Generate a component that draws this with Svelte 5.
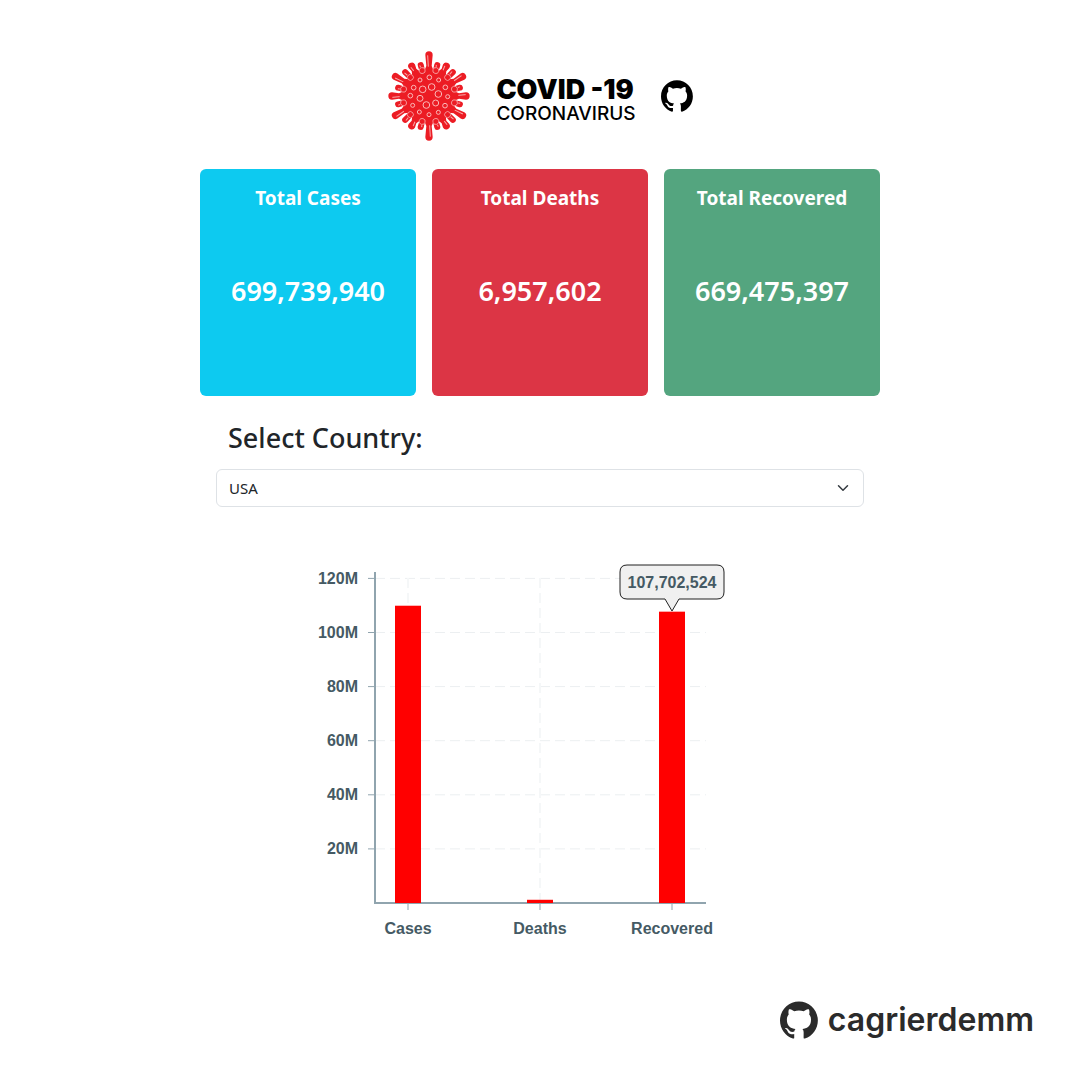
<script>
  const totals = [
    { title: 'Total Cases', value: 699739940, tone: 'cases' },
    { title: 'Total Deaths', value: 6957602, tone: 'deaths' },
    { title: 'Total Recovered', value: 669475397, tone: 'recovered' }
  ];

  const format = (n) => n.toLocaleString('en-US');

  const countries = ['USA', 'India', 'France', 'Germany', 'Brazil', 'Turkey'];
  let country = $state('USA');

  // Plot geometry, in SVG user units.
  const base = 353;
  const perMillion = 2.705;
  const ticks = [20, 40, 60, 80, 100, 120].map((m) => ({
    label: `${m}M`,
    y: base - m * perMillion
  }));
  const bars = [
    { label: 'Cases', value: 109.9, x: 108 },
    { label: 'Deaths', value: 1.19, x: 240 },
    { label: 'Recovered', value: 107.702524, x: 372 }
  ].map((b) => ({ ...b, top: base - b.value * perMillion }));

  // Virus drawing: long spikes every 30 degrees, short ones between them.
  const longTips = [126, 106, 119, 114, 119, 106, 126, 106, 119, 114, 119, 106];
  const spikes = longTips.map((tip, i) => ({ angle: i * 30, tip }));
  const studs = Array.from({ length: 12 }, (_, i) => ({
    angle: i * 30 + 15,
    tip: i % 3 === 1 ? 101 : 96
  }));
  const rings = [
    [150, 110, 7], [122, 118, 6], [178, 118, 6], [130, 146, 10], [157, 139, 10],
    [198, 140, 7], [103, 141, 7], [93, 165, 7], [177, 160, 10], [205, 168, 6],
    [122, 173, 9], [100, 194, 6], [141, 193, 10], [169, 187, 9], [197, 195, 7],
    [120, 214, 6], [149, 222, 6], [177, 215, 6]
  ];
</script>

{#snippet octocat()}
  <svg viewBox="0 0 98 96" aria-hidden="true">
    <path
      fill="currentColor"
      d="M48.854 0C21.839 0 0 22 0 49.217c0 21.756 13.993 40.172 33.405 46.69 2.427.49 3.316-1.059 3.316-2.362 0-1.141-.08-5.052-.08-9.127-13.59 2.934-16.42-5.867-16.42-5.867-2.184-5.704-5.42-7.17-5.42-7.17-4.448-3.015.324-3.015.324-3.015 4.934.326 7.523 5.052 7.523 5.052 4.367 7.496 11.404 5.378 14.235 4.074.404-3.178 1.699-5.378 3.074-6.6-10.839-1.141-22.243-5.378-22.243-24.283 0-5.378 1.94-9.778 5.014-13.2-.485-1.222-2.184-6.275.486-13.038 0 0 4.125-1.304 13.426 5.052a46.97 46.97 0 0 1 12.214-1.63c4.125 0 8.33.571 12.213 1.63 9.302-6.356 13.427-5.052 13.427-5.052 2.67 6.763.97 11.816.485 13.038 3.155 3.422 5.015 7.822 5.015 13.2 0 18.905-11.404 23.06-22.324 24.283 1.78 1.548 3.316 4.481 3.316 9.126 0 6.6-.08 11.897-.08 13.526 0 1.304.89 2.853 3.316 2.364 19.412-6.52 33.405-24.935 33.405-46.691C97.707 22 75.788 0 48.854 0z"
    />
  </svg>
{/snippet}

<div class="page">
  <header>
    <svg class="virus" viewBox="23 28 252 276" aria-hidden="true">
      <g fill="#ec1c24">
        {#each studs as s}
          <g transform="translate(149 166) rotate({s.angle})">
            <path d="M-8 -70 L-9 {-s.tip} A9 9 0 0 1 9 {-s.tip} L8 -70 Z" />
            <path class="shine" d="M-2 -90 L-3 {-s.tip}" />
          </g>
        {/each}
        {#each spikes as s}
          <g transform="translate(149 166) rotate({s.angle})">
            <path d="M-18 -66 L-8 -90 L-11 {-s.tip + 3} A11 11 0 1 1 11 {-s.tip + 3} L8 -90 L18 -66 Z" />
            <path class="shine" d="M-2 -88 L-4 {-s.tip + 4}" />
          </g>
        {/each}
        <circle cx="149" cy="166" r="82" />
        {#each studs as s}
          <g transform="translate(149 166) rotate({s.angle})">
            <circle class="stud" cx="0" cy="-79" r="9" />
          </g>
        {/each}
      </g>
      {#each rings as [cx, cy, r]}
        <circle class="ring" {cx} {cy} {r} />
      {/each}
    </svg>
    <h1>
      <span class="name">COVID -19</span>
      <span class="sub">CORONAVIRUS</span>
    </h1>
    <a class="repo" href="#source" aria-label="GitHub repository">{@render octocat()}</a>
  </header>

  <main>
    <section class="cards">
      {#each totals as t}
        <article class={t.tone}>
          <h2>{t.title}</h2>
          <p>{format(t.value)}</p>
        </article>
      {/each}
    </section>

    <section class="picker">
      <label for="country">Select Country:</label>
      <div class="field">
        <select id="country" bind:value={country}>
          {#each countries as c}
            <option value={c}>{c}</option>
          {/each}
        </select>
        <svg viewBox="0 0 16 16" aria-hidden="true">
          <path d="m2 5 6 6 6-6" fill="none" stroke="#343a40" stroke-width="2" stroke-linecap="round" stroke-linejoin="round" />
        </svg>
      </div>
    </section>

    <svg class="chart" viewBox="0 0 480 400" role="img" aria-label="Cases, deaths and recoveries">
      {#each ticks as t}
        <path class="grid" d="M75 {t.y} H406" />
        <path class="tick" d="M68 {t.y} H74" />
        <text x="58" y={Math.round(t.y + 5.3)} text-anchor="end">{t.label}</text>
      {/each}
      {#each bars as b}
        <path class="grid column" d="M{b.x} {base} V28" />
        <path class="tick below" d="M{b.x} 354 V360" />
        <text x={b.x} y="384" text-anchor="middle">{b.label}</text>
      {/each}
      <path class="axis" d="M75 22 V353 H406" />
      {#each bars as b}
        <rect class="bar" x={b.x - 13} y={b.top} width="26" height={base - b.top} />
      {/each}
      <path
        class="bubble"
        d="M327 15 H417 Q424 15 424 22 V42 Q424 49 417 49 H379 L372 61 L365 49 H327 Q320 49 320 42 V22 Q320 15 327 15 Z"
      />
      <text x="372" y="38" text-anchor="middle">107,702,524</text>
    </svg>
  </main>

  <footer>
    <a href="#author">
      {@render octocat()}
      <span>cagrierdemm</span>
    </a>
  </footer>
</div>

<style>
  :global(body) {
    margin: 0;
    background: #fff;
  }

  .page {
    font-family: 'Noto Sans', 'Open Sans', sans-serif;
    color: #212529;
    padding: 50px 16px 40px;
  }

  header {
    display: flex;
    justify-content: center;
    align-items: center;
    gap: 25px;
  }

  .virus {
    width: 84px;
    height: 92px;
  }

  .shine {
    fill: none;
    stroke: #f9a9a9;
    stroke-width: 3;
  }

  .stud {
    stroke: #fbc4c4;
    stroke-width: 2;
  }

  .ring {
    fill: none;
    stroke: #fbb8b8;
    stroke-width: 3;
  }

  h1 {
    display: flex;
    flex-direction: column;
    margin: 10px 0 0;
    font-family: Inter, sans-serif;
    color: #000;
  }

  .name {
    font-size: 27px;
    font-weight: 900;
    line-height: 26px;
  }

  .sub {
    font-size: 19px;
    font-weight: 500;
    line-height: 22px;
  }

  .repo {
    color: #000;
  }

  .repo svg {
    display: block;
    width: 32px;
    height: 32px;
  }

  main {
    max-width: 680px;
    margin: 27px auto 0;
  }

  .cards {
    display: grid;
    grid-template-columns: repeat(3, 1fr);
    gap: 16px;
  }

  article {
    display: flex;
    flex-direction: column;
    min-height: 195px;
    padding: 16px;
    border-radius: 6px;
    color: #fff;
    text-align: center;
  }

  .cases {
    background: #0dcaf0;
  }

  .deaths {
    background: #dc3545;
  }

  .recovered {
    background: #54a57f;
  }

  h2 {
    margin: 0;
    font-size: 19px;
    font-weight: 700;
    line-height: 26px;
  }

  article p {
    margin: 62px 0 0;
    font-size: 27px;
    font-weight: 600;
    line-height: 36px;
  }

  .picker {
    padding: 24px 16px 0;
  }

  label {
    display: block;
    padding-left: 12px;
    font-size: 27px;
    font-weight: 500;
    line-height: 36px;
  }

  .field {
    display: grid;
    align-items: center;
    margin-top: 13px;
  }

  select {
    grid-area: 1 / 1;
    width: 100%;
    height: 38px;
    padding: 0 36px 0 12px;
    border: 1px solid #dee2e6;
    border-radius: 6px;
    background: #fff;
    color: #212529;
    font-family: inherit;
    font-size: 15px;
    appearance: none;
  }

  .field svg {
    grid-area: 1 / 1;
    justify-self: end;
    width: 12px;
    height: 12px;
    margin-right: 15px;
    pointer-events: none;
  }

  .chart {
    display: block;
    width: 100%;
    max-width: 480px;
    margin: 43px auto 0;
    font-family: 'Liberation Sans', Arial, sans-serif;
    font-size: 16px;
    font-weight: 700;
  }

  .chart text {
    fill: #455a64;
  }

  .grid {
    fill: none;
    stroke: #eceff1;
    stroke-dasharray: 10 5;
  }

  .column {
    stroke: #f5f7f8;
    stroke-width: 2;
  }

  .tick {
    stroke: #90a4ae;
  }

  .below {
    stroke: #c7d1d6;
    stroke-width: 2;
  }

  .axis {
    fill: none;
    stroke: #90a4ae;
    stroke-width: 2;
  }

  .bar {
    fill: red;
  }

  .bubble {
    fill: #f0f0f0;
    stroke: #212121;
  }

  footer {
    display: flex;
    justify-content: flex-end;
    margin-top: 48px;
    padding-right: 30px;
  }

  footer a {
    display: flex;
    align-items: center;
    gap: 10px;
    color: #2b2b2b;
    font-family: Inter, sans-serif;
    font-size: 32px;
    font-weight: 600;
    line-height: 44px;
    text-decoration: none;
  }

  footer svg {
    width: 38px;
    height: 38px;
  }
</style>
